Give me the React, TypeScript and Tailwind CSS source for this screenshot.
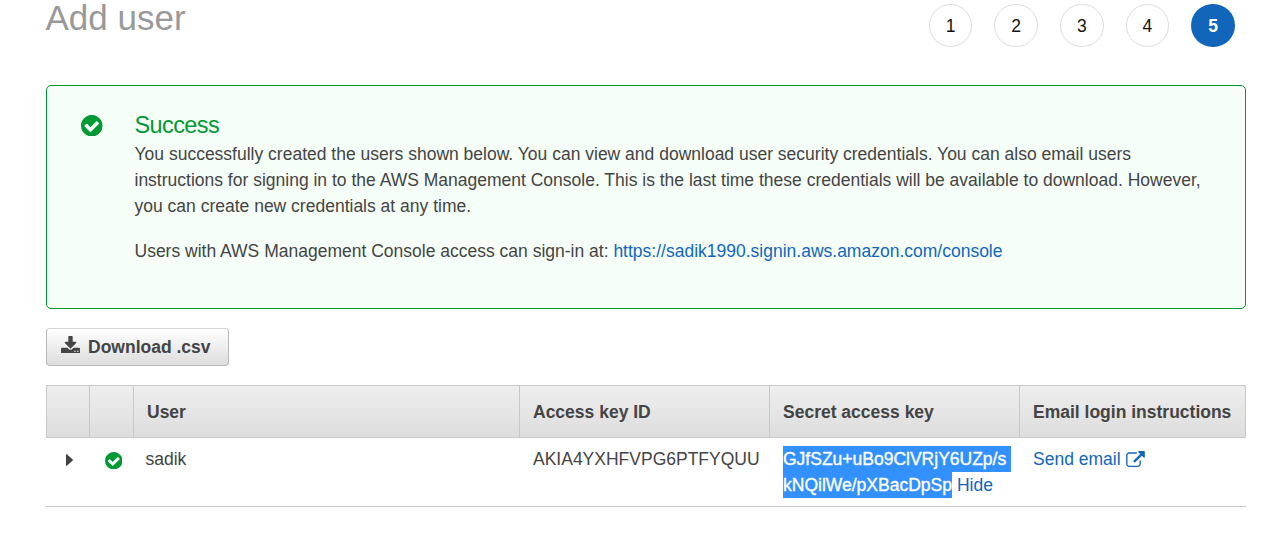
import React from "react";

const STEPS = [1, 2, 3, 4, 5];
const COLS = "grid grid-cols-[43px_44px_386px_250px_250px_227px]";

function CheckCircle({ className }: { className: string }) {
  return (
    <svg viewBox="128 128 1536 1536" className={className} fill="currentColor" aria-hidden="true">
      <path d="M1412 734q0-28-18-46l-91-90q-19-19-45-19t-45 19l-408 407-226-226q-19-19-45-19t-45 19l-91 90q-18 18-18 46 0 27 18 45l362 362q19 19 45 19 27 0 46-19l543-543q18-18 18-45zm252 162q0 209-103 385.5t-279.5 279.5-385.5 103-385.5-103-279.5-279.5-103-385.5 103-385.5 279.5-279.5 385.5-103 385.5 103 279.5 279.5 103 385.5z" />
    </svg>
  );
}

function DownloadIcon() {
  return (
    <svg viewBox="64 0 1664 1536" className="mt-[6.5px] h-[17.5px] w-[19px] shrink-0" fill="currentColor" aria-hidden="true">
      <path d="M1344 1344q0-26-19-45t-45-19-45 19-19 45 19 45 45 19 45-19 19-45zm256 0q0-26-19-45t-45-19-45 19-19 45 19 45 45 19 45-19 19-45zm128-224v320q0 40-28 68t-68 28h-1472q-40 0-68-28t-28-68v-320q0-40 28-68t68-28h465l135 136q58 56 136 56t136-56l136-136h464q40 0 68 28t28 68zm-325-569q17 41-14 70l-448 448q-18 19-45 19t-45-19l-448-448q-31-29-14-70 17-39 59-39h256v-448q0-26 19-45t45-19h256q26 0 45 19t19 45v448h256q42 0 59 39z" />
    </svg>
  );
}

function ExternalLinkIcon() {
  return (
    <svg viewBox="0 0 1792 1536" className="mt-[5px] ml-[5.5px] h-4 w-[19px] shrink-0" fill="currentColor" aria-hidden="true">
      <path d="M1408 928v320q0 119-84.5 203.5t-203.5 84.5h-832q-119 0-203.5-84.5t-84.5-203.5v-832q0-119 84.5-203.5t203.5-84.5h704q14 0 23 9t9 23v64q0 14-9 23t-23 9h-704q-66 0-113 47t-47 113v832q0 66 47 113t113 47h832q66 0 113-47t47-113v-320q0-14 9-23t23-9h64q14 0 23 9t9 23zm384-864v512q0 26-19 45t-45 19-45-19l-176-176-652 652q-10 10-23 10t-23-10l-114-114q-10-10-10-23t10-23l652-652-176-176q-19-19-19-45t19-45 45-19h512q26 0 45 19t19 45z" />
    </svg>
  );
}

function HeaderCell({ children }: { children?: React.ReactNode }) {
  return (
    <div className="flex items-center border-l border-[#c8c8c8] pl-[13px] font-bold whitespace-nowrap">{children}</div>
  );
}

export default function App() {
  return (
    <div className="h-[547px] w-[1266px] overflow-hidden bg-white pl-[46px] font-['Liberation_Sans',Arial,sans-serif] text-[17.5px] leading-[26px] text-[#444444]">
      <header className="flex h-[85px] w-[1200px] items-start justify-between">
        <h1 className="-ml-[0.5px] text-[35px] leading-[36px] text-[#999999]">Add user</h1>
        <ol className="mt-[3.5px] mr-[11px] flex gap-[21.9px]">
          {STEPS.map((step) => (
            <li
              key={step}
              className={
                step === 5
                  ? "flex size-[43.75px] items-center justify-center rounded-full bg-[#1166bb] pt-px font-bold text-white"
                  : "flex size-[43.75px] items-center justify-center rounded-full border border-[#dddddd] pt-px text-[#111111]"
              }
            >
              {step}
            </li>
          ))}
        </ol>
      </header>

      <section className="flex h-[224px] w-[1200px] rounded-[5px] border border-[#009933] bg-[#f6fef8] pt-[25px] pl-[34px]">
        <CheckCircle className="mt-[3.5px] h-[21.5px] w-[21.5px] shrink-0 text-[#009933]" />
        <div className="ml-[32px] whitespace-nowrap">
          <h2 className="mb-0.5 text-[23.5px] leading-[28px] tracking-[-0.6px] text-[#009933]">Success</h2>
          <p>
            You successfully created the users shown below. You can view and download user security credentials. You can also email users
            <br />
            instructions for signing in to the AWS Management Console. This is the last time these credentials will be available to download. However,
            <br />
            you can create new credentials at any time.
          </p>
          <p className="mt-[19px]">
            Users with AWS Management Console access can sign-in at:{" "}
            <a className="text-[#1166bb]">https://sadik1990.signin.aws.amazon.com/console</a>
          </p>
        </div>
      </section>

      <button className="mt-[19px] flex h-[38px] w-[183px] items-start rounded-[4px] border border-[#b8b8b8] border-t-[#d4d4d4] bg-linear-to-b from-white to-[#dddddd] pl-[14px] font-bold">
        <DownloadIcon />
        <span className="mt-[5px] ml-[8px] whitespace-nowrap">Download .csv</span>
      </button>

      <div className="mt-[19px] w-[1200px]">
        <div className={`${COLS} h-[53px] border-y border-r border-[#c8c8c8] bg-linear-to-b from-[#eeeeee] to-[#dddddd]`}>
          <HeaderCell />
          <HeaderCell />
          <HeaderCell>User</HeaderCell>
          <HeaderCell>Access key ID</HeaderCell>
          <HeaderCell>Secret access key</HeaderCell>
          <HeaderCell>Email login instructions</HeaderCell>
        </div>
        <div className={`${COLS} h-[69px] border-b border-[#c8c8c8] pt-2 whitespace-nowrap`}>
          <div className="pt-[8px] pl-[19.5px]">
            <svg viewBox="0 0 7 12" className="h-3 w-[7px]" fill="currentColor" aria-hidden="true">
              <path d="M0 .5v11q.2.6.9.3L6.7 6.5q.4-.5 0-1L.9.2Q.2-.1 0 .5z" />
            </svg>
          </div>
          <div className="pt-[5.5px] pl-[15.5px]">
            <CheckCircle className="size-[17.5px] text-[#009933]" />
          </div>
          <div className="pl-[12.5px]">sadik</div>
          <div className="pl-[14px]">AKIA4YXHFVPG6PTFYQUU</div>
          <div className="flex flex-col items-start pl-[14px]">
            <span className="h-[26px] w-[228px] bg-[#3390ff] text-white [-webkit-text-stroke:0.35px_white]">GJfSZu+uBo9ClVRjY6UZp/s</span>
            <span className="flex">
              <span className="h-[26px] bg-[#3390ff] text-white [-webkit-text-stroke:0.35px_white]">kNQilWe/pXBacDpSp</span>
              <a className="ml-[5px] text-[#1166bb]">Hide</a>
            </span>
          </div>
          <a className="flex items-start pl-[14px] text-[#1166bb]">
            Send email
            <ExternalLinkIcon />
          </a>
        </div>
      </div>
    </div>
  );
}
